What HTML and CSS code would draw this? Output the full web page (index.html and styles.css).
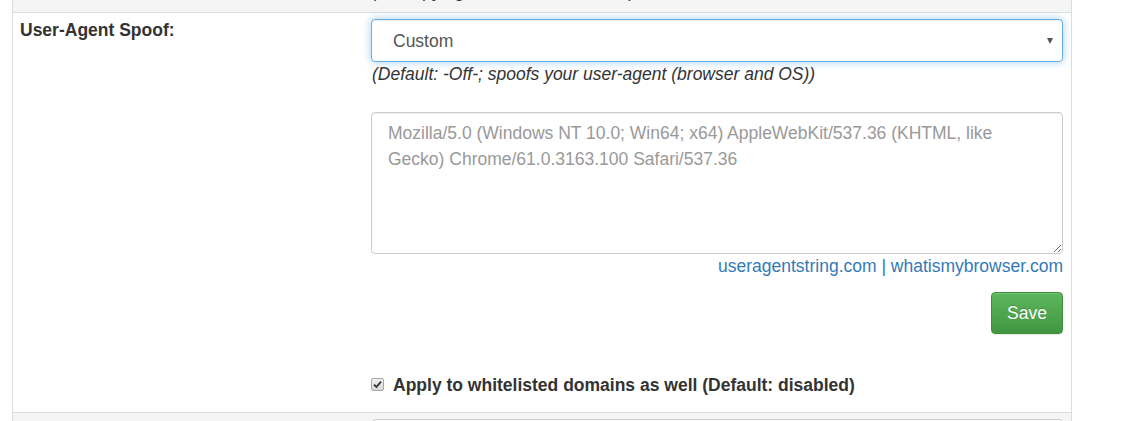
FILE: index.html
```html
<!DOCTYPE html>
<html>
<head>
<meta charset="utf-8">
<link rel="stylesheet" href="styles.css">
</head>
<body>
<div class="page">
  <div class="table">
    <div class="row striped top">
      <div class="cell label-cell"></div>
      <div class="cell field-cell"><div class="clip"><em class="help">(No copying of the whole site text)</em></div></div>
    </div>
    <div class="row">
      <div class="cell label-cell"><span class="label">User-Agent Spoof:</span></div>
      <div class="cell field-cell">
        <div class="select-wrap">
          <select class="select"><option>Custom</option></select>
          <span class="caret"></span>
        </div>
        <em class="help">(Default: -Off-; spoofs your user-agent (browser and OS))</em>
        <textarea class="textarea" placeholder="Mozilla/5.0 (Windows NT 10.0; Win64; x64) AppleWebKit/537.36 (KHTML, like Gecko) Chrome/61.0.3163.100 Safari/537.36"></textarea>
        <div class="links"><a href="#">useragentstring.com</a> | <a href="#">whatismybrowser.com</a></div>
        <div class="actions"><button class="btn-save">Save</button></div>
        <label class="check">
          <span class="box"><svg width="9" height="9" viewBox="0 0 9 9"><path d="M1 4.6 L3.4 7 L8 1.6" fill="none" stroke="#333" stroke-width="1.8"/></svg></span>
          <span class="check-text">Apply to whitelisted domains as well (Default: disabled)</span>
        </label>
      </div>
    </div>
    <div class="row striped bottom">
      <div class="cell label-cell"></div>
      <div class="cell field-cell"><div class="next-input"></div></div>
    </div>
  </div>
</div>
</body>
</html>
```
FILE: styles.css
```css
html, body {
  margin: 0;
  padding: 0;
  background: #fff;
  font-family: "Liberation Sans", Arial, sans-serif;
  color: #333;
  font-size: 17.5px;
  line-height: 25px;
}
.page {
  padding-left: 12px;
  height: 421px;
  overflow: hidden;
}
.table {
  width: 1058px;
  border-left: 1px solid #ddd;
  border-right: 1px solid #ddd;
}
.row {
  display: flex;
  border-bottom: 1px solid #ddd;
}
.row.striped { background: #f5f5f5; }
.row.top { height: 12px; overflow: hidden; }
.row.top .cell { padding-top: 0; padding-bottom: 0; }
.row.bottom { border-bottom: none; height: 20px; }
.cell {
  padding: 6px 8px;
  box-sizing: border-box;
}
.label-cell {
  width: 350px;
  padding-left: 7px;
  padding-top: 5px;
}
.field-cell {
  flex: 1;
  display: flex;
  flex-direction: column;
}
.clip {
  height: 12px;
  overflow: hidden;
}
.clip .help {
  display: block;
  margin-top: -21px;
  padding-left: 1px;
}
.label {
  font-weight: bold;
}
.select-wrap {
  position: relative;
}
.select {
  width: 100%;
  height: 43px;
  box-sizing: border-box;
  appearance: none;
  -webkit-appearance: none;
  background: #fff;
  border: 1px solid #66afe9;
  border-radius: 4px;
  box-shadow: inset 0 1px 1px rgba(0,0,0,.075), 0 0 8px rgba(102,175,233,.6);
  font-family: "Liberation Sans", Arial, sans-serif;
  font-size: 17.5px;
  color: #555;
  padding: 0 16px 0 21px;
  outline: none;
}
.caret {
  position: absolute;
  right: 10px;
  top: 19px;
  width: 0;
  height: 0;
  border-left: 3.5px solid transparent;
  border-right: 3.5px solid transparent;
  border-top: 6px solid #555;
}
.help {
  font-style: italic;
  display: block;
  padding-left: 1px;
}
.textarea {
  margin-top: 25px;
  width: 100%;
  height: 142px;
  box-sizing: border-box;
  border: 1px solid #ccc;
  border-radius: 4px;
  box-shadow: inset 0 1px 1px rgba(0,0,0,.075);
  padding: 7px 16px;
  font-family: "Liberation Sans", Arial, sans-serif;
  font-size: 17.5px;
  line-height: 26px;
  color: #555;
  display: block;
}
.textarea::placeholder { color: #999; }
.links {
  text-align: right;
  line-height: 25px;
  color: #337ab7;
}
.links a { color: #337ab7; text-decoration: none; }
.actions {
  display: flex;
  justify-content: flex-end;
  margin-top: 13px;
}
.btn-save {
  height: 42px;
  padding: 0 15px;
  font-family: "Liberation Sans", Arial, sans-serif;
  font-size: 17.5px;
  color: #fff;
  border: 1px solid #3e8f3e;
  border-radius: 4px;
  background: linear-gradient(to bottom, #5cb85c 0%, #419641 100%);
  box-shadow: inset 0 1px 0 rgba(255,255,255,.15), 0 1px 1px rgba(0,0,0,.075);
  text-shadow: 0 -1px 0 rgba(0,0,0,.2);
}
.check {
  display: flex;
  align-items: center;
  margin-top: 39px;
  margin-bottom: 8px;
  gap: 9px;
}
.box {
  width: 11px;
  height: 11px;
  border: 1px solid #a8a8a8;
  border-radius: 2px;
  background: linear-gradient(to bottom, #f0f0f0, #d8d8d8);
  display: flex;
  align-items: center;
  justify-content: center;
  margin-top: -2px;
}
.box svg { display: block; }
.check-text {
  font-weight: bold;
}
.next-input {
  height: 30px;
  border: 1px solid #ccc;
  border-radius: 4px;
  background: #fff;
  margin-left: 1px;
}
```
